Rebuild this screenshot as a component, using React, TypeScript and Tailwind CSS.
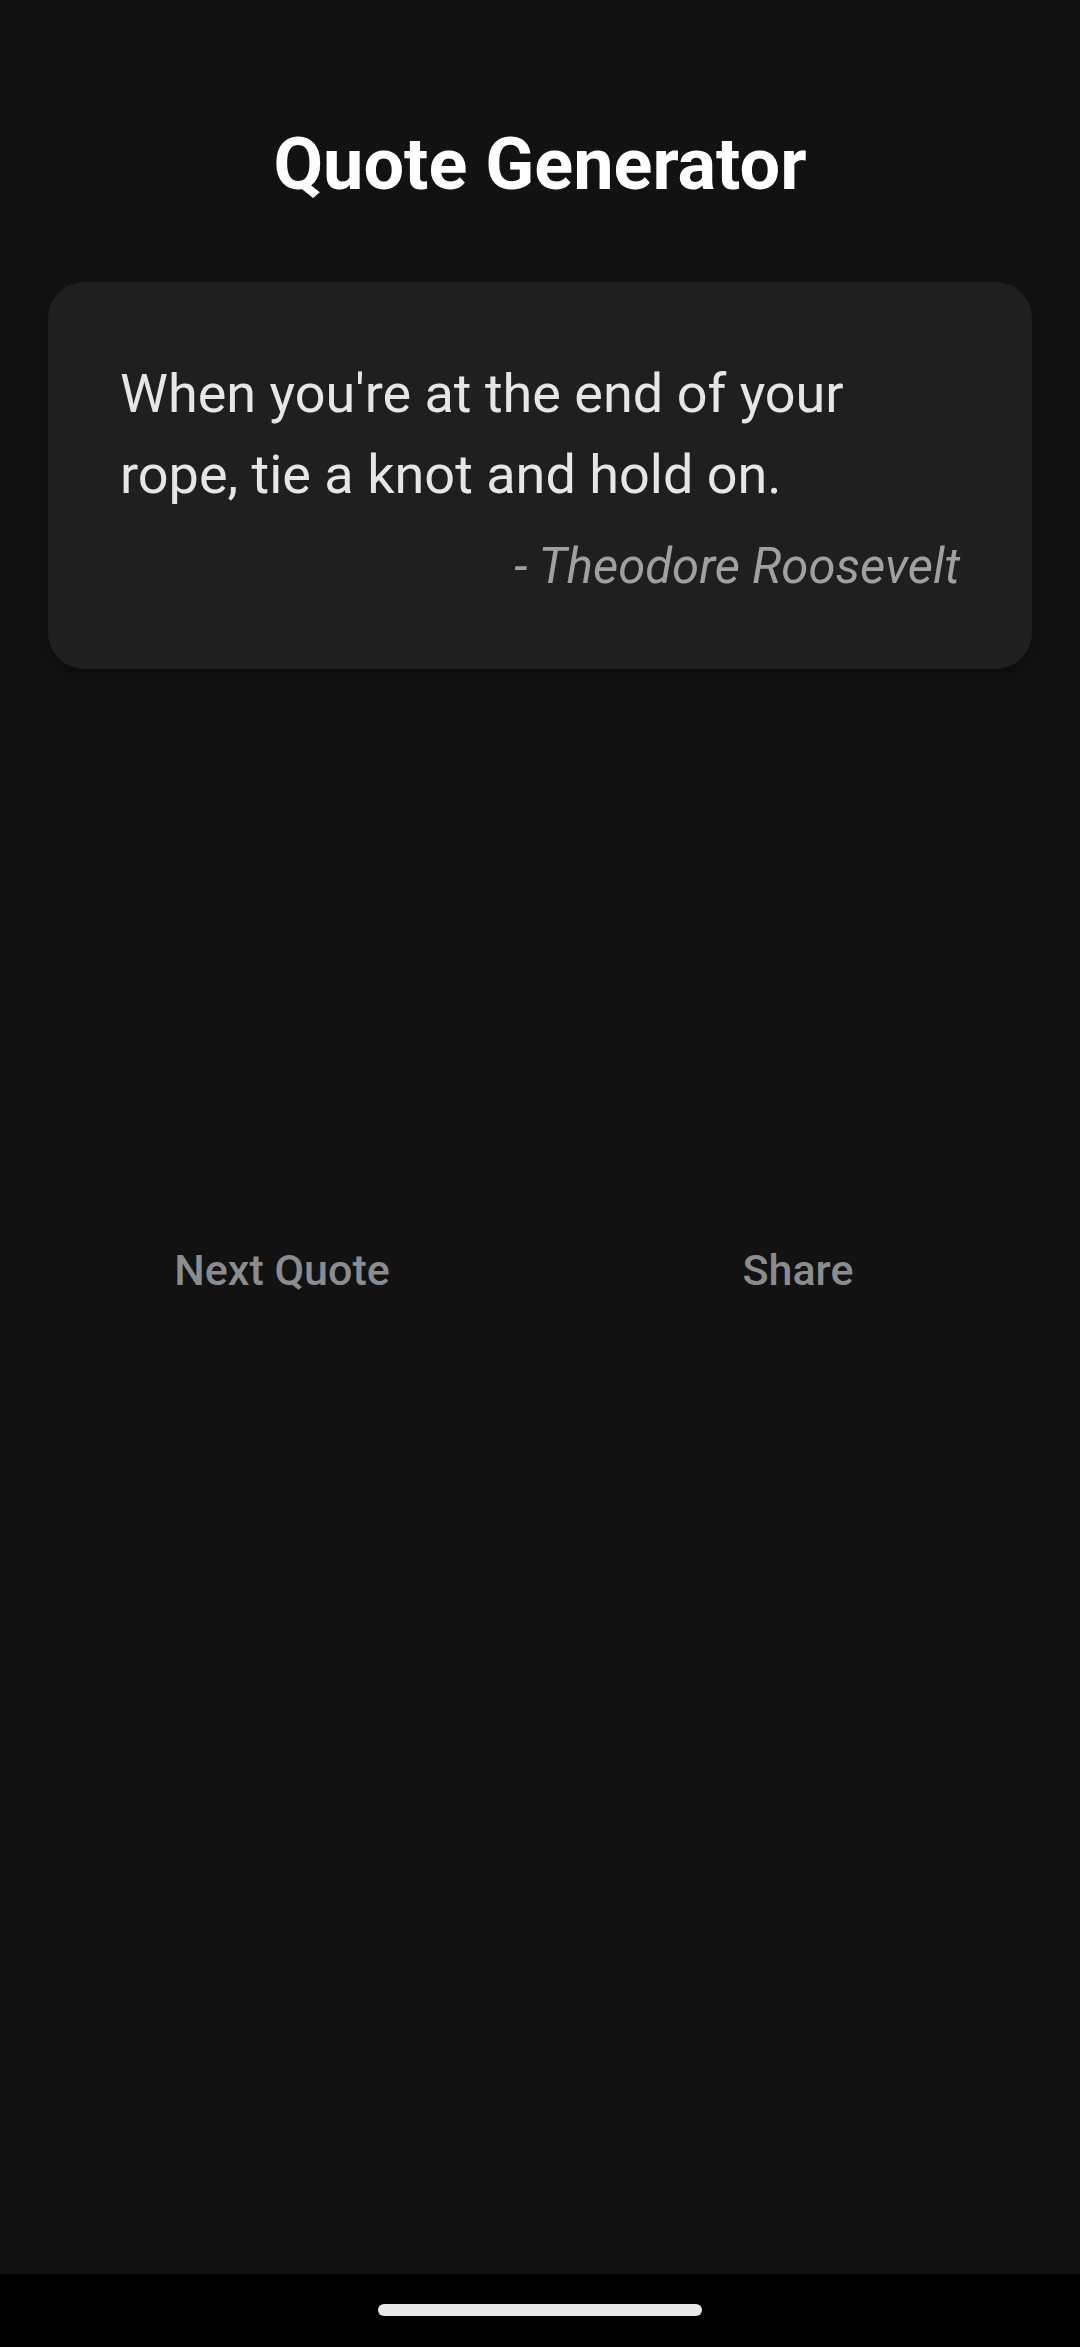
export default function App() {
  return (
    <div
      className="w-full h-[2347px] flex flex-col bg-[#121212]"
      style={{ fontFamily: "Roboto, 'Noto Sans', sans-serif" }}
    >
      {/* Screen content */}
      <div className="flex-1 px-[48px] pt-[123px]">
        <h1 className="text-center text-[72px] leading-[84px] font-bold text-white">
          Quote Generator
        </h1>

        {/* Quote card */}
        <div className="mt-[75px] rounded-[36px] bg-[#1f1f1f] px-[72px] pt-[71px] pb-[74px] shadow-[0_6px_16px_rgba(0,0,0,0.35)]">
          <p className="text-[54px] leading-[81px] text-[#e6e6e6]">
            When you're at the end of your rope, tie a knot and hold on.
          </p>
          <p className="mt-[24px] text-right text-[49px] leading-[56px] italic text-[#a0a0a0]">
            - Theodore Roosevelt
          </p>
        </div>

        {/* Actions */}
        <div className="mt-[541px] flex gap-[48px]">
          <button className="flex-1 h-[120px] flex items-center justify-center text-[43px] font-medium text-[#8a8c90]">
            Next Quote
          </button>
          <button className="flex-1 h-[120px] flex items-center justify-center text-[43px] font-medium text-[#8a8c90]">
            Share
          </button>
        </div>
      </div>

      {/* Gesture nav bar */}
      <div className="h-[73px] bg-black flex items-start justify-center pt-[30px]">
        <div className="w-[324px] h-[12px] rounded-full bg-[#e8e8e8]" />
      </div>
    </div>
  );
}
